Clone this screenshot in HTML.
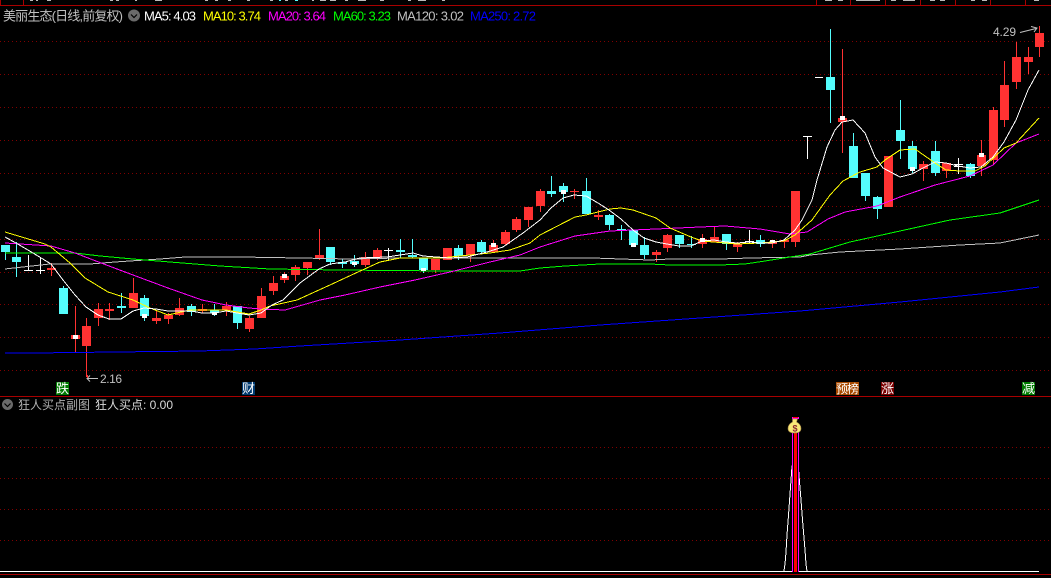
<!DOCTYPE html>
<html><head><meta charset="utf-8"><style>
html,body{margin:0;padding:0;background:#000;width:1051px;height:578px;overflow:hidden}
svg{display:block}
text{font-family:"Liberation Sans","Noto Sans CJK SC",sans-serif;font-size:12px}
.c{shape-rendering:crispEdges}
</style></head><body>
<svg width="1051" height="578" viewBox="0 0 1051 578" xmlns="http://www.w3.org/2000/svg">
<defs><pattern id="d" width="4" height="1" patternUnits="userSpaceOnUse"><rect width="1" height="1" fill="#800000"/></pattern></defs>
<rect width="1051" height="578" fill="#000"/>
<g class="c" fill="url(#d)">
<rect y="41" width="1051" height="1"/><rect y="74" width="1051" height="1"/><rect y="107" width="1051" height="1"/><rect y="140" width="1051" height="1"/><rect y="173" width="1051" height="1"/><rect y="206" width="1051" height="1"/><rect y="239" width="1051" height="1"/><rect y="272" width="1051" height="1"/><rect y="304" width="1051" height="1"/><rect y="337" width="1051" height="1"/><rect y="370" width="1051" height="1"/><rect y="447" width="1051" height="1"/><rect y="478" width="1051" height="1"/><rect y="509" width="1051" height="1"/><rect y="540" width="1051" height="1"/>
</g>
<g class="c" fill="none" stroke="#a80000">
<path d="M0 5.5H1051M0 396.5H1051M0 574.5H1051M0.5 0V5M23.5 0V5M816.5 0V5M850.5 0V5M885.5 0V5M920.5 0V5M955.5 0V5M990.5 0V5M1025.5 0V5"/>
</g>
<path class="c" fill="#bbb" d="M30 0h3v1h-3zM36 0h2v1h-2zM47 0h4v1h-4zM110 0h3v1h-3zM116 0h3v1h-3zM135 0h2v1h-2zM155 0h7v1h-7zM205 0h3v1h-3zM215 0h3v1h-3zM228 0h3v1h-3zM247 0h3v1h-3zM270 0h3v1h-3zM285 0h3v1h-3zM312 0h2v1h-2zM320 0h6v1h-6zM330 0h6v1h-6zM345 0h3v1h-3zM358 0h8v1h-8zM380 0h4v1h-4zM408 0h3v1h-3zM418 0h8v1h-8zM442 0h3v1h-3zM825 0h7v1h-7zM838 0h5v1h-5zM856 0h24v1h-24zM891 0h5v1h-5zM903 0h12v1h-12zM930 0h5v1h-5zM940 0h5v1h-5zM971 0h4v1h-4zM982 0h5v1h-5zM1034 0h5v1h-5z"/>
<path class="c" fill="#54fcfc" d="M279 0h2v1h-2zM295 0h3v1h-3z"/>

<g class="c">
<path fill="none" stroke="#54fcfc" d="M5.5 245V260M16.5 242V277M63.5 286V314M121.5 293V313M144.5 295V321M191.5 304V316M214.5 304V316M237.5 306V329M330.5 247V265M342.5 259V268M354.5 255V267M400.5 239V258M412.5 239V258M423.5 258V273M458.5 245V260M481.5 240V254M551.5 176V197M563.5 183V202M586.5 178V214M609.5 214V230M621.5 225V240M633.5 230V247M644.5 237V259M679.5 235V248M691.5 236V248M726.5 234V250M760.5 235V247M830.5 29V123M853.5 133V178M865.5 173V201M877.5 196V219M900.5 100V159M912.5 141V173M935.5 141V176M970.5 163V178"/>
<path fill="#54fcfc" d="M1 245h9v7h-9zM12 257h9v5h-9zM59 288h9v26h-9zM117 306h9v2h-9zM140 298h9v18h-9zM187 306h9v6h-9zM210 310h9v3h-9zM233 306h9v17h-9zM326 247h9v15h-9zM338 262h9v2h-9zM350 261h9v3h-9zM396 250h9v2h-9zM408 255h9v2h-9zM419 258h9v12h-9zM454 248h9v8h-9zM477 242h9v10h-9zM547 191h9v3h-9zM559 186h9v6h-9zM582 191h9v23h-9zM605 215h9v10h-9zM617 229h9v1h-9zM629 230h9v15h-9zM640 245h9v10h-9zM675 235h9v9h-9zM687 244h9v1h-9zM722 234h9v10h-9zM756 240h9v4h-9zM826 77h9v13h-9zM849 146h9v32h-9zM861 173h9v23h-9zM873 197h9v12h-9zM896 130h9v11h-9zM908 146h9v23h-9zM931 151h9v22h-9zM966 164h9v12h-9z"/>
<path fill="none" stroke="#ff3232" d="M51.5 263V276M75.5 306V352M86.5 318V377M98.5 303V326M109.5 303V320M133.5 278V308M156.5 310V324M168.5 313V324M179.5 298V316M202.5 304V313M226.5 302V316M249.5 316V332M261.5 288V318M273.5 276V295M284.5 272V283M295.5 265V281M307.5 262V275M319.5 229V260M365.5 252V267M377.5 248V260M435.5 259V273M447.5 248V260M470.5 244V262M493.5 240V252M505.5 230V245M516.5 217V232M528.5 207V227M540.5 189V212M574.5 189V199M598.5 210V220M656.5 250V262M667.5 234V252M702.5 234V248M714.5 226V242M737.5 242V252M772.5 240V248M784.5 240V248M795.5 191V247M842.5 49V153M888.5 156V207M923.5 161V181M946.5 163V178M981.5 140V176M993.5 107V165M1004.5 61V127M1016.5 42V89M1028.5 47V74M1039.5 26V57"/>
<path fill="#ff3232" d="M47 268h9v2h-9zM71 335h9v4h-9zM82 326h9v20h-9zM94 309h9v9h-9zM105 309h9v2h-9zM129 293h9v15h-9zM152 318h9v3h-9zM164 315h9v4h-9zM175 308h9v7h-9zM198 309h9v2h-9zM222 306h9v4h-9zM245 318h9v11h-9zM257 296h9v22h-9zM269 283h9v8h-9zM280 276h9v4h-9zM291 267h9v8h-9zM303 262h9v6h-9zM315 255h9v3h-9zM361 257h9v8h-9zM373 250h9v8h-9zM431 259h9v11h-9zM443 248h9v12h-9zM466 244h9v11h-9zM489 245h9v7h-9zM501 232h9v12h-9zM512 219h9v11h-9zM524 207h9v13h-9zM536 191h9v15h-9zM570 191h9v1h-9zM594 215h9v2h-9zM652 252h9v3h-9zM663 235h9v13h-9zM698 239h9v5h-9zM710 237h9v5h-9zM733 244h9v3h-9zM768 242h9v2h-9zM780 240h9v2h-9zM791 191h9v51h-9zM838 118h9v4h-9zM884 156h9v51h-9zM919 164h9v5h-9zM942 163h9v8h-9zM977 155h9v11h-9zM989 110h9v50h-9zM1000 85h9v35h-9zM1012 57h9v25h-9zM1024 57h9v5h-9zM1035 33h9v14h-9z"/>
<path fill="none" stroke="#fff" d="M28.5 255V271M24 270.5h9M40.5 258V274M36 270.5h9M388.5 248V260M384 250.5h9M749.5 230V243M745 241.5h9M958.5 158V174M954 164.5h9M954 166.5h9M807.5 136V159M803 136.5h9M815 77.5h8"/>
</g>

<g class="c" fill="none" stroke-width="1">
<polyline stroke="#0000ff" points="5,353 33,353 115,352 200,351 255,349 300,346 400,340 500,333 600,325 700,318 800,311 900,302 1000,292 1039,287"/>
<polyline stroke="#c0c0c0" points="5,269 50,264 90,264 115,262 160,259 185,257 240,257 300,258 350,259 400,258 593,258 650,260 670,259 720,259 750,258 800,257 810,255 840,252 900,249 960,245 1000,243 1039,235"/>
<polyline stroke="#00ff00" points="5,253 75,253 100,256 133,259 170,262 220,266 270,269 340,270 445,271 520,271 540,268 565,266 600,264 650,264 670,265 720,265 745,264 765,261 790,257 810,254 850,242 900,231 950,220 1000,213 1039,200"/>
<polyline stroke="#ff00ff" points="5,243 51,246 75,253 109,266 133,275 168,288 202,300 226,305 249,308 261,309 285,310 320,300 345,295 380,287 415,280 450,272 490,262 520,255 540,247 575,236 610,231 656,229 700,227 725,226 760,229 790,234 807,232 828,219 845,212 877,206 900,197 935,185 970,176 993,165 1016,143 1039,134"/>
<polyline stroke="#ffff00" points="5,232 45,244 51,247 70,263 85,278 108,292 133,300 150,308 168,315 190,310 226,310 249,314 261,310 270,306 297,300 330,285 345,278 358,272 380,262 390,260 400,258 440,258 470,255 490,253 510,250 530,243 540,235 575,217 586,215 610,209 621,208 633,210 656,218 670,228 691,237 702,241 737,244 760,243 784,241 795,235 812,220 830,195 843,181 860,172 877,167 885,160 900,150 915,149 935,163 946,170 960,171 975,171 985,166 1004,148 1016,143 1039,118"/>
<polyline stroke="#ffffff" points="5,237 16,243 33,253 51,264 63,280 75,295 86,307 98,315 109,319 121,319 133,311 144,308 156,309 168,311 191,311 202,313 214,313 226,311 237,313 249,315 261,313 272,305 283,300 300,283 319,269 330,264 345,262 360,258 387,257 413,253 423,256 450,258 467,257 487,252 503,247 523,233 540,220 551,208 563,198 574,195 586,196 598,203 609,210 621,219 633,230 644,238 656,242 667,244 679,246 691,246 702,241 714,240 726,242 737,243 749,242 760,243 772,243 784,240 795,230 802,220 812,200 817,180 827,147 835,130 842,122 853,120 865,133 875,157 883,168 900,177 912,174 923,168 935,162 946,163 958,166 970,168 981,167 993,157 1004,142 1016,120 1028,90 1039,70"/>
</g>

<path class="c" fill="#fff" d="M73 335h5v4h-5zM142 314h5v4h-5zM212 312h5v3h-5zM282 274h5v4h-5zM352 262h5v3h-5zM421 268h5v3h-5zM491 243h5v4h-5zM561 190h5v4h-5zM631 243h5v4h-5zM700 238h5v4h-5zM770 240h5v2h-5zM840 116h5v4h-5zM910 167h5v4h-5zM979 153h5v4h-5z"/>

<text x="3" y="20.500" fill="#c0c0c0" style="font-size:13px" textLength="120" lengthAdjust="spacing">美丽生态(日线,前复权)</text>
<circle cx="134" cy="15.500" r="6" fill="#6a6a6a"/>
<path d="M131 14.500l3 3 3-3" fill="none" stroke="#000" stroke-width="1.2"/>
<text x="144" y="20.500" fill="#fff" style="font-size:13px" textLength="52">MA5: 4.03</text>
<text x="203" y="20.500" fill="#ffff00" style="font-size:13px" textLength="58">MA10: 3.74</text>
<text x="268" y="20.500" fill="#ff00ff" style="font-size:13px" textLength="58">MA20: 3.64</text>
<text x="333" y="20.500" fill="#00ff00" style="font-size:13px" textLength="58">MA60: 3.23</text>
<text x="397" y="20.500" fill="#c0c0c0" style="font-size:13px" textLength="67">MA120: 3.02</text>
<text x="470" y="20.500" fill="#0000ff" style="font-size:13px" textLength="66">MA250: 2.72</text>

<text x="993" y="36" fill="#c0c0c0" textLength="23">4.29</text>
<path d="M1020 32.500L1036 28.500M1031 26.500L1037 28L1034 32" fill="none" stroke="#c0c0c0"/>
<text x="100" y="383" fill="#c0c0c0" textLength="22">2.16</text>
<path d="M98 378.500H87M90 375.500L87 378.500L90 381.500" fill="none" stroke="#c0c0c0"/>
<rect x="87" y="375" width="1" height="3" fill="#ff3232"/>

<rect x="56" y="382" width="13" height="13" fill="#007a00"/>
<text x="56" y="393" fill="#fff" style="font-size:13px">跌</text>
<rect x="242" y="382" width="13" height="13" fill="#003a70"/>
<text x="242" y="393" fill="#fff" style="font-size:13px">财</text>
<rect x="836" y="382" width="23" height="13" fill="#a84a00"/>
<text x="836" y="393" fill="#fff" style="font-size:12px" textLength="23">预榜</text>
<rect x="881" y="382" width="13" height="13" fill="#7a0000"/>
<text x="881" y="393" fill="#fff" style="font-size:13px">涨</text>
<rect x="1022" y="382" width="13" height="13" fill="#007a00"/>
<text x="1022" y="393" fill="#fff" style="font-size:13px">减</text>

<circle cx="7.500" cy="404.500" r="5.500" fill="#6a6a6a"/>
<path d="M4.500 403.500l3 3 3-3" fill="none" stroke="#000" stroke-width="1.2"/>
<text x="18" y="409" fill="#b0b0b0" textLength="72">狂人买点副图</text>
<text x="95" y="409" fill="#d8d8d8" textLength="78">狂人买点: 0.00</text>

<g class="c">
<path fill="none" stroke="#fff" d="M0 571.500H1039"/>
<polyline fill="none" stroke="#fff" points="784,571 785,564 786,552 787,535 788,522 789,508 790,494 791,480 792,466 798,462 799,475 800,488 801,500 802,513 803,526 804,538 805,550 806,564 807,571"/>
<rect x="792" y="431" width="7" height="141" fill="#000"/>
<rect x="792" y="431" width="1" height="141" fill="#ff00ff"/>
<rect x="798" y="431" width="1" height="141" fill="#ff00ff"/>
<rect x="794" y="431" width="3" height="141" fill="#ff0000"/>
<rect x="792" y="417" width="7" height="2" fill="#ff00ff"/>
<rect x="793" y="417" width="5" height="1" fill="#ff0000"/>
</g>
<path d="M792.500 419h5l-1 3c3 1.500 4.500 4 4.500 6.500 0 3-2.500 4.500-6.500 4.500s-6.500-1.500-6.500-4.500c0-2.500 1.500-5 4.500-6.500z" fill="#f8e878" stroke="#a08040" stroke-width=".6"/>
<text x="795" y="431.500" fill="#8a2a30" text-anchor="middle" style="font-size:9px;font-weight:bold">$</text>
</svg>
</body></html>
